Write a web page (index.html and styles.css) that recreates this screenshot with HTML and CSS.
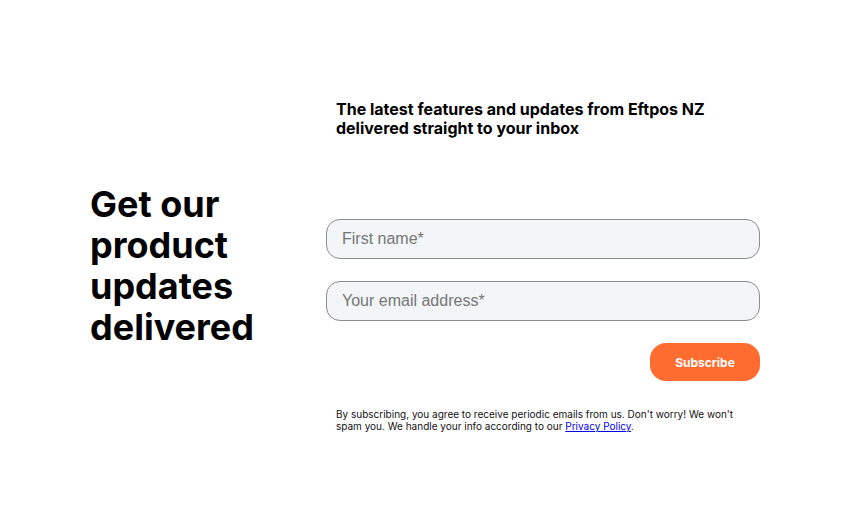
FILE: index.html
```html
<!DOCTYPE html>
<html lang="en">
<head>
<meta charset="utf-8">
<title>Product updates</title>
<link rel="stylesheet" href="styles.css">
</head>
<body>
<section class="signup">
  <h1 class="signup-title">Get our product updates delivered</h1>
  <div class="signup-body">
    <p class="signup-lead">The latest features and updates from Eftpos NZ delivered straight to your inbox</p>
    <form class="signup-form">
      <input class="field" type="text" placeholder="First name*">
      <input class="field" type="email" placeholder="Your email address*">
      <button class="submit" type="button">Subscribe</button>
    </form>
    <p class="disclaimer">By subscribing, you agree to receive periodic emails from us. Don't worry! We won't spam you. We handle your info according to our <a href="#">Privacy Policy</a>.</p>
  </div>
</section>
</body>
</html>
```
FILE: styles.css
```css
html, body {
  margin: 0;
  height: 100%;
  background: #fff;
}
body {
  display: flex;
  align-items: center;
  justify-content: center;
  font-family: "Inter", "Liberation Sans", sans-serif;
  color: #000;
}
.signup {
  width: 670px;
  display: grid;
  grid-template-columns: 236px 434px;
  align-items: center;
}
.signup-title {
  margin: 0;
  font-size: 36px;
  line-height: 41px;
  font-weight: 700;
  width: 190px;
}
.signup-body {
  display: flex;
  flex-direction: column;
}
.signup-lead {
  margin: 0 10px;
  font-size: 16px;
  line-height: 19px;
  font-weight: 700;
}
.signup-form {
  display: flex;
  flex-direction: column;
  gap: 22px;
  margin-top: 81px;
}
.field {
  box-sizing: border-box;
  height: 40px;
  width: 100%;
  border: 1px solid #8c8c8c;
  border-radius: 14px;
  background: #f3f6f9;
  padding: 0 15px;
  font-family: "Liberation Sans", Arial, sans-serif;
  font-size: 16px;
  color: #333;
  outline: none;
}
.field::placeholder {
  color: #757575;
}
.submit {
  align-self: flex-end;
  width: 110px;
  height: 38px;
  border: none;
  border-radius: 16px;
  background: #ff6c30;
  color: #fff;
  font-family: "Inter", sans-serif;
  font-weight: 700;
  font-size: 12px;
}
.disclaimer {
  margin: 27px 10px 0;
  font-size: 10px;
  line-height: 12px;
  color: #111;
}
.disclaimer a {
  color: #0000ee;
}
```
